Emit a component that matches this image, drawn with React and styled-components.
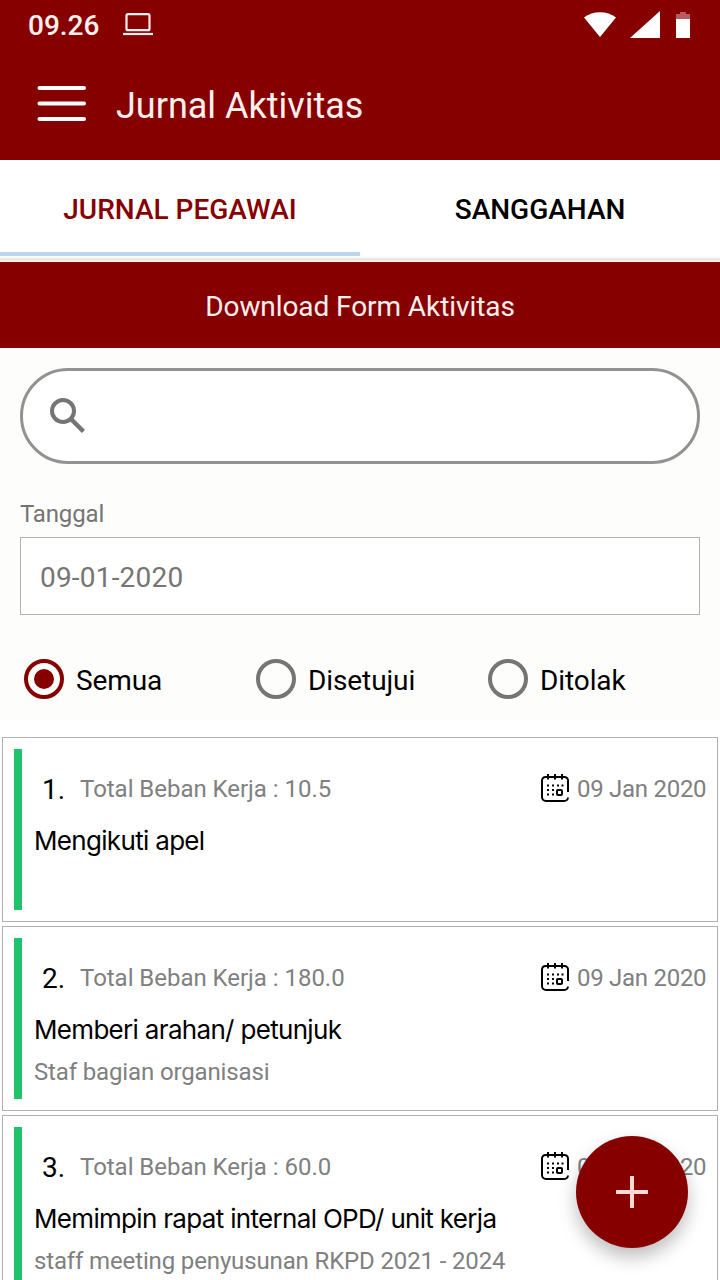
import styled, { createGlobalStyle } from 'styled-components'

const entries = [
	{ no: 1, load: '10.5', date: '09 Jan 2020', title: 'Mengikuti apel', note: '' },
	{ no: 2, load: '180.0', date: '09 Jan 2020', title: 'Memberi arahan/ petunjuk', note: 'Staf bagian organisasi' },
	{
		no: 3,
		load: '60.0',
		date: '09 Jan 2020',
		title: 'Memimpin rapat internal OPD/ unit kerja',
		note: 'staff meeting penyusunan RKPD 2021 - 2024',
	},
]

const filters = ['Semua', 'Disetujui', 'Ditolak']

function CalendarIcon() {
	return (
		<svg width="30" height="30" viewBox="0 0 30 30" fill="none" stroke="#000" strokeWidth="2">
			<path d="M28 18V6.500a3.500 3.500 0 0 0-3.500-3.500h-19A3.500 3.500 0 0 0 2 6.500V23a4 4 0 0 0 4 4h18a4 4 0 0 0 4-3.500" />
			<path d="M8 0v5.500M15 0v5.500M22 0v5.500" />
			<path d="M7 11.500h2M12 11.500h2M17 11.500h2M21.500 11.500h2M7 16h2M12 16h2M7 20.500h2M12 20.500h2" />
			<rect x="17" y="16" width="5" height="5" rx="1" />
		</svg>
	)
}

function JournalCard({ entry }) {
	return (
		<Card>
			<Marker />
			<CardBody>
				<CardHead>
					<Number>{entry.no}.</Number>
					<Load>Total Beban Kerja : {entry.load}</Load>
					<CalendarIcon />
					<DateText>{entry.date}</DateText>
				</CardHead>
				<CardTitle>{entry.title}</CardTitle>
				<Note>{entry.note}</Note>
			</CardBody>
		</Card>
	)
}

function App() {
	return (
		<Screen>
			<GlobalStyle />

			<StatusBar>
				<Clock>09.26</Clock>
				<svg width="30" height="24" viewBox="0 0 30 24" fill="none" stroke="#fff0ee" strokeWidth="2.200">
					<rect x="3.500" y="1.200" width="23" height="16" rx="1.500" />
					<path d="M0 21h30" />
				</svg>
				<StatusIcons>
					<svg width="32" height="26" viewBox="0 0 32 26" fill="#fff">
						<path d="M0 5.500C9-1.500 23-1.500 32 5.500L16 25Z" />
					</svg>
					<svg width="30" height="28" viewBox="0 0 30 28" fill="#fff">
						<path d="M30 0v27H0z" />
					</svg>
					<Battery width="14" height="27" viewBox="0 0 14 27">
						<path d="M4 0h6v2h4v5H0V2h4z" fill="#b85a60" />
						<path d="M0 7h14v19H0z" fill="#fff" />
					</Battery>
				</StatusIcons>
			</StatusBar>

			<Toolbar>
				<svg width="50" height="38" viewBox="0 0 50 38" stroke="#fff" strokeWidth="4" strokeLinecap="round">
					<path d="M2.500 2H47M2.500 17.500H47M2.500 33H47" />
				</svg>
				<Heading>Jurnal Aktivitas</Heading>
			</Toolbar>

			<Tabs>
				<Tab $active>JURNAL PEGAWAI</Tab>
				<Tab>SANGGAHAN</Tab>
			</Tabs>

			<Download>Download Form Aktivitas</Download>

			<Filters>
				<SearchBox>
					<svg width="36" height="36" viewBox="0 0 36 36" fill="none" stroke="#757575" strokeWidth="4">
						<circle cx="13" cy="13" r="11" />
						<path d="M21.500 21.500L33.500 33.500" strokeWidth="4.500" />
					</svg>
				</SearchBox>
				<Label>Tanggal</Label>
				<DateField>09-01-2020</DateField>
				<RadioGroup>
					{filters.map((name, i) => (
						<Option key={name}>
							<Radio $checked={i === 0} />
							<OptionName>{name}</OptionName>
						</Option>
					))}
				</RadioGroup>
			</Filters>

			<List>
				{entries.map((entry) => (
					<JournalCard key={entry.no} entry={entry} />
				))}
			</List>

			<AddButton>
				<svg width="32" height="32" viewBox="0 0 32 32" stroke="#ffd9d6" strokeWidth="4">
					<path d="M16 0v32M0 16h32" />
				</svg>
			</AddButton>
		</Screen>
	)
}
export default App

const GlobalStyle = createGlobalStyle`
	* {
		box-sizing: border-box;
	}

	body {
		margin: 0;
		overflow: hidden;
		font-family: Roboto, sans-serif;
	}

	svg {
		display: block;
		flex: none;
	}
`

const Screen = styled.div`
	position: relative;
	width: 720px;
	height: 1280px;
	overflow: hidden;
	background: #fff;
	color: #000;
`

const StatusBar = styled.div`
	display: flex;
	align-items: center;
	height: 50px;
	padding: 0 30px 0 28px;
	background: #870000;
`

const Clock = styled.div`
	width: 95px;
	padding-top: 2px;
	font-size: 28px;
	font-weight: 500;
	line-height: 50px;
	color: #fff0ee;
`

const StatusIcons = styled.div`
	display: flex;
	align-items: center;
	gap: 14px;
	margin-left: auto;
`

const Battery = styled.svg`
	margin-left: 2px;
`

const Toolbar = styled.header`
	display: flex;
	align-items: center;
	gap: 29px;
	height: 110px;
	padding: 0 37px;
	background: #870000;
`

const Heading = styled.h1`
	margin: 0;
	padding-top: 2px;
	font-size: 36px;
	font-weight: 400;
	color: #fff0ee;
`

const Tabs = styled.nav`
	display: flex;
	height: 102px;
	padding-bottom: 6px;
	background: linear-gradient(#fff 97px, #e8edf5 98px, #f3dede 100px, #fff 102px);
`

const Tab = styled.div`
	flex: 1;
	height: 96px;
	border-bottom: 4px solid ${(p) => (p.$active ? '#b9d5f0' : 'transparent')};
	font-size: 28px;
	font-weight: 500;
	line-height: 100px;
	text-align: center;
	color: ${(p) => (p.$active ? '#870000' : '#000')};
`

const Download = styled.div`
	height: 86px;
	background: #870000;
	font-size: 28px;
	line-height: 90px;
	letter-spacing: -0.08px;
	text-align: center;
	color: #fff0ee;
`

const Filters = styled.section`
	height: 372px;
	padding: 20px 20px 0;
	background: #fdfdfb;
`

const SearchBox = styled.div`
	display: flex;
	align-items: center;
	height: 96px;
	padding-left: 27px;
	border: 3px solid #929292;
	border-radius: 48px;
	background: #fff;
`

const Label = styled.div`
	margin-top: 34px;
	font-size: 24px;
	line-height: 32px;
	letter-spacing: -0.15px;
	color: #757575;
`

const DateField = styled.div`
	height: 78px;
	margin-top: 7px;
	padding-left: 19px;
	border: 1px solid #b4b4b4;
	background: #fff;
	font-size: 28px;
	line-height: 79px;
	letter-spacing: 0.2px;
	color: #757575;
`

const RadioGroup = styled.div`
	display: flex;
	margin-top: 44px;
	padding-left: 4px;
`

const Option = styled.div`
	display: flex;
	flex: none;
	align-items: center;
	gap: 12px;
	width: 232px;
	height: 40px;

	&:last-child {
		width: auto;
	}
`

const OptionName = styled.span`
	padding-top: 3px;
	font-size: 28px;
	line-height: 40px;
	letter-spacing: -0.1px;
`

const Radio = styled.span`
	width: 40px;
	height: 40px;
	border: 4px solid ${(p) => (p.$checked ? '#870000' : '#757575')};
	border-radius: 50%;
	padding: 6px;
	background: ${(p) => (p.$checked ? '#870000' : 'transparent')} content-box;
`

const List = styled.main`
	display: flex;
	flex-direction: column;
	gap: 4px;
	padding: 17px 2px 0;
`

const Card = styled.article`
	display: flex;
	flex: none;
	gap: 12px;
	height: 185px;
	padding: 11px;
	border: 1px solid #b0b0b0;
	background: #fff;
`

const Marker = styled.div`
	width: 8px;
	height: 161px;
	background: #20c36c;
`

const CardBody = styled.div`
	flex: 1;
	padding-top: 22px;
`

const CardHead = styled.div`
	display: flex;
	align-items: center;
	height: 36px;
	padding-left: 8px;
`

const Number = styled.div`
	width: 38px;
	font-size: 28px;
`

const Load = styled.div`
	flex: 1;
	font-size: 24px;
	letter-spacing: -0.03px;
	color: #808080;
`

const DateText = styled.div`
	width: 129px;
	margin-left: 7px;
	font-size: 24px;
	letter-spacing: -0.28px;
	white-space: nowrap;
	color: #808080;
`

const CardTitle = styled.div`
	margin-top: 16px;
	font-family: Inter, Roboto, sans-serif;
	font-size: 26px;
	line-height: 36px;
	letter-spacing: -0.68px;
	white-space: nowrap;
`

const Note = styled.div`
	margin-top: 8px;
	font-size: 24px;
	line-height: 32px;
	letter-spacing: -0.14px;
	white-space: nowrap;
	color: #808080;
`

const AddButton = styled.button`
	position: absolute;
	right: 32px;
	bottom: 32px;
	display: flex;
	align-items: center;
	justify-content: center;
	width: 112px;
	height: 112px;
	padding: 0;
	border: none;
	border-radius: 50%;
	background: #870000;
	box-shadow: 0 9px 18px rgba(0, 0, 0, 0.26);
`
